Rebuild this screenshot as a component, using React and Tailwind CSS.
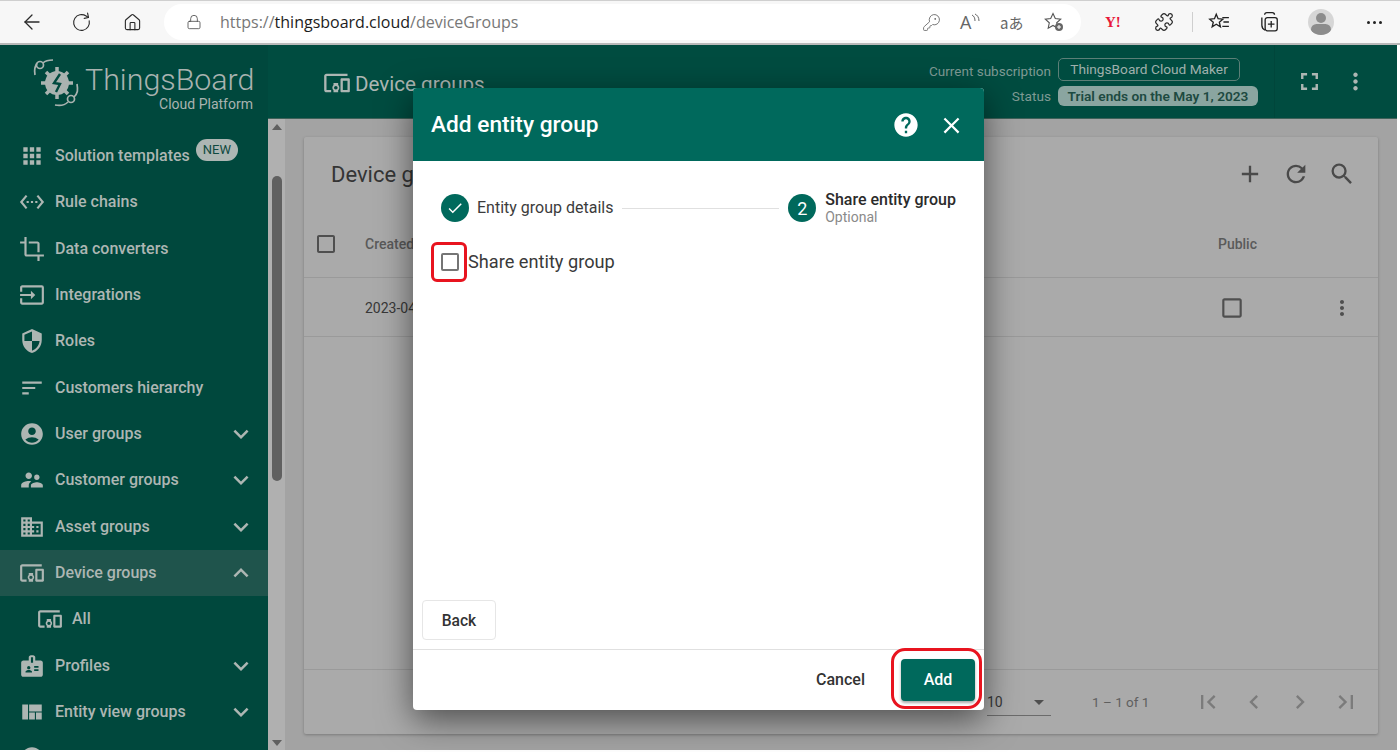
import React from 'react';
import { ArrowLeft, RotateCw, Home, Lock, KeyRound, Puzzle } from 'lucide-react';
import {
  MdApps, MdSettingsEthernet, MdCrop, MdInput, MdSecurity, MdSort, MdAccountCircle, MdSupervisorAccount,
  MdDomain, MdDevicesOther, MdBadge, MdViewQuilt, MdKeyboardArrowDown, MdKeyboardArrowUp, MdFullscreen,
  MdMoreVert, MdAdd, MdRefresh, MdSearch, MdHelp, MdClose, MdCheck, MdFirstPage, MdChevronLeft,
  MdChevronRight, MdLastPage, MdArrowDropDown, MdCheckBoxOutlineBlank,
} from 'react-icons/md';

const NAV = [
  { label: 'Solution templates', icon: MdApps, badge: true },
  { label: 'Rule chains', icon: MdSettingsEthernet },
  { label: 'Data converters', icon: MdCrop },
  { label: 'Integrations', icon: MdInput },
  { label: 'Roles', icon: MdSecurity },
  { label: 'Customers hierarchy', icon: MdSort },
  { label: 'User groups', icon: MdAccountCircle, arrow: 'down' },
  { label: 'Customer groups', icon: MdSupervisorAccount, arrow: 'down' },
  { label: 'Asset groups', icon: MdDomain, arrow: 'down' },
  { label: 'Device groups', icon: MdDevicesOther, arrow: 'up', active: true },
  { label: 'All', icon: MdDevicesOther, sub: true },
  { label: 'Profiles', icon: MdBadge, arrow: 'down' },
  { label: 'Entity view groups', icon: MdViewQuilt, arrow: 'down' },
];

function BrowserBar() {
  return (
    <div className="h-[45px] bg-[#f7f7f7] border-t border-b-2 border-t-[#cfcfcf] border-b-[#b9b9b9] flex items-center shrink-0 text-[#2b2b2b]">
      <div className="w-[164px] flex items-center shrink-0">
        <ArrowLeft size={24} strokeWidth={1.3} className="ml-[20px]" />
        <RotateCw size={21} strokeWidth={1.3} className="ml-[27px] -rotate-12" />
        <Home size={19} strokeWidth={1.4} className="ml-[31px]" />
      </div>
      <div className="w-[917px] h-[36px] bg-white rounded-full flex items-center shrink-0">
        <Lock size={16} strokeWidth={1.2} className="ml-[22px] text-[#444]" />
        <span className="ml-[18px] font-['Open_Sans',sans-serif] text-[16px] text-[#777]">
          https://<span className="text-[#1c1c1c]">thingsboard.cloud</span>/deviceGroups
        </span>
        <div className="ml-auto flex items-center text-[#666]">
          <KeyRound size={19} strokeWidth={1.1} />
          <span className="ml-[19px] w-[24px] flex items-start">
            <span className="font-['Open_Sans',sans-serif] text-[18px] leading-none">A</span>
            <svg width="9" height="11" viewBox="0 0 9 11" fill="none" stroke="#666" strokeWidth="1">
              <path d="M1 2c2 1 3 3 3 6M4 1c2 1 4 3 4 7" />
            </svg>
          </span>
          <span className="ml-[16px] w-[26px] whitespace-nowrap font-['Noto_Sans_CJK_JP',sans-serif] text-[15px] leading-none">aあ</span>
          <svg width="20" height="20" viewBox="0 0 20 20" className="ml-[18px] mr-[17px]" fill="none" stroke="#555" strokeWidth="1.1">
            <path d="M9 1.5l2.3 5 5.4.6-4 3.7 1.1 5.4L9 13.5l-4.800 2.700 1.100-5.400-4-3.700 5.400-.6z" />
            <circle cx="15" cy="15" r="4" fill="#666" stroke="none" />
            <path d="M15 13v4M13 15h4" stroke="#fff" />
          </svg>
        </div>
      </div>
      <span className="ml-[24px] w-[20px] font-['Liberation_Serif',serif] font-bold text-[15px] text-[#e8173a] leading-none">Y!</span>
      <Puzzle size={20} strokeWidth={1.5} className="ml-[29px]" />
      <div className="ml-[18px] w-px h-[20px] bg-[#cfcfcf]" />
      <svg width="22" height="22" viewBox="0 0 20 20" className="ml-[15px]" fill="none" stroke="#222" strokeWidth="1.200">
        <path d="M7.500 3l1.700 4 4.300.4-3.200 2.800 1 4.200-3.800-2.300-3.700 2.300 1-4.200L1.600 7.400 5.900 7z" />
        <path d="M13 6h6M14 10h5M13 14h6" />
      </svg>
      <svg width="22" height="22" viewBox="0 0 20 20" className="ml-[28px]" fill="none" stroke="#222" strokeWidth="1.200">
        <path d="M6 3.500a2 2 0 0 1 2-2h5a2 2 0 0 1 2 2M3.500 6v7a5 5 0 0 0 3 4.500" />
        <rect x="6.500" y="6" width="11" height="12" rx="2" />
        <path d="M12 9v6M9 12h6" />
      </svg>
      <div className="ml-[28px] w-[26px] h-[26px] rounded-full bg-[#d6d6d6] flex flex-col items-center overflow-hidden">
        <div className="mt-[4px] w-[10px] h-[10px] rounded-full bg-[#8c8c8c]" />
        <div className="mt-[1px] w-[20px] h-[12px] rounded-full bg-[#8c8c8c]" />
      </div>
      <span className="ml-[33px] flex gap-[3px]">
        <i className="w-[3px] h-[3px] rounded-full bg-[#222]" />
        <i className="w-[3px] h-[3px] rounded-full bg-[#222]" />
        <i className="w-[3px] h-[3px] rounded-full bg-[#222]" />
      </span>
    </div>
  );
}

function Logo() {
  return (
    <svg width="48" height="50" viewBox="0 0 48 50" fill="none" stroke="#a9b3b0" strokeWidth="1.700" className="shrink-0">
      <circle cx="7" cy="7" r="3.500" />
      <path d="M2 17C1 11 2 9 4 5M10 5C12 3 15 2 20 2" />
      <circle cx="38" cy="41" r="3.500" />
      <path d="M44 26c1 6 1 9-3 13M35 44c-3 3-8 4-13 3" />
      <circle cx="24" cy="25" r="12" fill="#a9b3b0" stroke="none" />
      <path d="M24 9v32M8 25h32M13 14l22 22M35 14L13 36" stroke="#a9b3b0" strokeWidth="3.500" />
      <path d="M27 16l-6 9 6 1-4 8" stroke="#004a3f" strokeWidth="2.400" />
    </svg>
  );
}

function Sidebar() {
  return (
    <aside className="w-[268px] shrink-0 bg-[#00483d] overflow-hidden font-['Roboto',sans-serif]">
      <div className="h-[88px] pl-[33px] pt-[13px] flex items-start">
        <Logo />
        <div className="ml-[4px] w-[168px] text-[#a9b3b0] text-right">
          <div className="text-[30.4px] font-light leading-[36px] mt-[4px] whitespace-nowrap">ThingsBoard</div>
          <div className="text-[14px] leading-[12px]">Cloud Platform</div>
        </div>
      </div>
      {NAV.map((item) => {
        const Icon = item.icon;
        return (
          <div
            key={item.label}
            className={`h-[46.33px] flex items-center text-[#adb6b3] ${item.active ? 'bg-[#1f544c]' : ''} ${item.sub ? 'pl-[37px]' : 'pl-[19px]'}`}
          >
            <Icon size={26} className="shrink-0" />
            <span className={`text-[16px] font-medium whitespace-nowrap ${item.sub ? 'ml-[9px]' : 'ml-[10px]'}`}>{item.label}</span>
            {item.badge && (
              <span className="ml-[6px] -mt-[12px] h-[22px] px-[7px] rounded-full bg-[#adb6b3] text-[#0f4a40] text-[13px] leading-[22px]">NEW</span>
            )}
            {item.arrow === 'down' && <MdKeyboardArrowDown size={30} className="ml-auto mr-[12px]" />}
            {item.arrow === 'up' && <MdKeyboardArrowUp size={30} className="ml-auto mr-[12px]" />}
          </div>
        );
      })}
      <div className="h-[46px] pl-[19px] flex items-center text-[#adb6b3]">
        <MdAccountCircle size={26} />
      </div>
    </aside>
  );
}

function Header() {
  return (
    <header className="h-[74px] bg-[#004c40] flex items-center shrink-0 font-['Roboto',sans-serif] border-b border-[#3f6159]">
      <div className="ml-[55px] mt-[5px] flex items-center text-[#adb6b3]">
        <MdDevicesOther size={28} className="-mt-[2px]" />
        <span className="ml-[4px] text-[20.6px] whitespace-nowrap">Device groups</span>
      </div>
      <div className="ml-auto mt-[2px] grid grid-cols-[auto_auto] gap-x-[7px] gap-y-[5px] items-center text-[13.7px] justify-items-start">
        <span className="justify-self-end text-[13.5px] text-[#7f9a94] mt-[2px]">Current subscription</span>
        <span className="h-[23px] w-[182px] rounded-[5px] border border-[#5c7f77] text-[#9fb0ac] text-center leading-[20px]">ThingsBoard Cloud Maker</span>
        <span className="justify-self-end text-[#7f9a94]">Status</span>
        <span className="h-[20px] w-[200px] rounded-[6px] bg-[#8aa5a0] text-[#1d4a41] font-semibold text-center leading-[20px]">Trial ends on the May 1, 2023</span>
      </div>
      <div className="ml-[16px] h-full w-px bg-[#00463b]" />
      <MdFullscreen size={29} className="ml-[20px] text-[#adb6b3]" />
      <MdMoreVert size={27} className="ml-[18px] mr-[28px] text-[#adb6b3]" />
    </header>
  );
}

function DeviceCard() {
  const ico = 'text-[#4a4a4a]';
  return (
    <div className="flex-1 mx-[19px] mt-[18px] mb-[16px] bg-[#aaaaaa] rounded-[2px] shadow-[0_1px_3px_rgba(0,0,0,0.25)] flex flex-col font-['Roboto',sans-serif]">
      <div className="h-[73px] pt-[1px] flex items-center pl-[27px] pr-[22px] shrink-0">
        <span className="text-[22px] text-[#353535]">Device groups</span>
        <div className="ml-auto flex gap-[18px]">
          <MdAdd size={28} className={ico} />
          <MdRefresh size={28} className={ico} />
          <MdSearch size={28} className={ico} />
        </div>
      </div>
      <div className="h-[68px] pt-[1px] flex items-center pl-[10px] border-b border-[#9a9a9a] shrink-0">
        <MdCheckBoxOutlineBlank size={24} className="text-[#4f4f4f]" />
        <span className="ml-[27px] text-[14px] font-medium text-[#5a5a5a]">Created time</span>
        <span className="ml-auto mr-[121px] text-[14px] font-medium text-[#5a5a5a]">Public</span>
      </div>
      <div className="h-[59px] pt-[2px] flex items-center pl-[61px] border-b border-[#9a9a9a] shrink-0">
        <span className="text-[14px] text-[#383838]">2023-04-17 10:00:00</span>
        <MdCheckBoxOutlineBlank size={26} className="ml-auto mr-[1px] text-[#4f4f4f]" />
        <MdMoreVert size={24} className="ml-[84px] mr-[24px] text-[#4f4f4f]" />
      </div>
      <div className="flex-1" />
      <div className="h-[65px] border-t border-[#9a9a9a] flex items-center shrink-0 text-[#5f5f5f]">
        <div className="ml-[683px] w-[64px] h-[27px] mt-[1px] border-b border-[#6b6b6b] flex items-center justify-between text-[14px] text-[#383838]">
          10
          <MdArrowDropDown size={24} className="text-[#4f4f4f]" />
        </div>
        <span className="ml-[41px] text-[13.5px] whitespace-nowrap">1 – 1 of 1</span>
        <div className="ml-[45px] flex gap-[18px] text-[#7b7b7b]">
          <MdFirstPage size={28} />
          <MdChevronLeft size={28} />
          <MdChevronRight size={28} />
          <MdLastPage size={28} />
        </div>
      </div>
    </div>
  );
}

function Dialog() {
  return (
    <div className="absolute left-[413px] top-[88px] w-[571px] h-[622px] bg-white rounded-[4px] shadow-[0_10px_34px_rgba(0,0,0,0.55)] flex flex-col font-['Roboto',sans-serif]">
      <div className="h-[73px] pt-[1px] bg-[#00695c] rounded-t-[4px] flex items-center pl-[18px] pr-[19px] text-white shrink-0">
        <h2 className="text-[22.7px] font-medium">Add entity group</h2>
        <MdHelp size={28} className="ml-auto" />
        <MdClose size={27} className="ml-[18px]" />
      </div>
      <div className="flex-1 flex flex-col px-[9px]">
        <div className="h-[60px] mt-[17px] flex items-center pl-[19px] pr-[19px] shrink-0">
          <div className="w-[28px] h-[28px] rounded-full bg-[#00695c] text-white flex items-center justify-center shrink-0">
            <MdCheck size={18} />
          </div>
          <span className="ml-[8px] text-[16px] text-[#3c3c3c] whitespace-nowrap">Entity group details</span>
          <div className="flex-1 mx-[9px] h-px bg-[#e0e0e0]" />
          <div className="w-[28px] h-[28px] rounded-full bg-[#00695c] text-white flex items-center justify-center shrink-0 text-[18px]">2</div>
          <div className="ml-[9px] leading-none">
            <div className="text-[16px] font-medium text-[#2b2b2b] whitespace-nowrap">Share entity group</div>
            <div className="mt-[2px] text-[14px] text-[#8a8a8a]">Optional</div>
          </div>
        </div>
        <label className="mt-[10px] ml-[19px] flex items-center">
          <span className="w-[18px] h-[18px] border-2 border-[#757575] rounded-[2px] shrink-0" />
          <span className="ml-[9px] text-[18.2px] text-[#3a3a3a]">Share entity group</span>
        </label>
        <button className="mt-auto mb-[9px] w-[74px] h-[40px] pt-[3px] border border-[#e6e6e6] rounded-[4px] text-[15.6px] font-medium text-[#333]">Back</button>
      </div>
      <div className="h-[61px] border-t border-[#e0e0e0] flex items-center justify-end pr-[9px] shrink-0">
        <button className="text-[16px] font-medium text-[#333]">Cancel</button>
        <button className="ml-[36px] w-[74px] h-[42px] rounded-[4px] bg-[#00695c] text-white text-[16px] font-medium shadow-[0_2px_3px_rgba(0,0,0,0.35)]">Add</button>
      </div>
      <div className="absolute left-[18px] top-[154px] w-[36px] h-[40px] border-[3px] border-[#e8141f] rounded-[6px]" />
      <div className="absolute left-[478px] top-[560px] w-[91px] h-[61px] border-[3px] border-[#e8141f] rounded-[14px]" />
    </div>
  );
}

export default function App() {
  return (
    <div className="relative w-[1400px] h-[752px] bg-white overflow-hidden flex flex-col">
      <BrowserBar />
      <div className="h-[705px] w-[1397px] flex shrink-0 overflow-hidden">
        <Sidebar />
        <div className="flex-1 flex flex-col min-w-0">
          <Header />
          <div className="flex-1 flex min-h-0 bg-[#a3a3a3]">
            <div className="w-[17px] bg-[#b0b0b0] flex flex-col items-center shrink-0">
              <span className="mt-[5px] w-0 h-0 border-x-[5px] border-x-transparent border-b-[6px] border-b-[#606060]" />
              <div className="mt-[46px] w-[10px] h-[305px] rounded-full bg-[#606060]" />
              <span className="mt-auto mb-[4px] w-0 h-0 border-x-[5px] border-x-transparent border-t-[6px] border-t-[#606060]" />
            </div>
            <DeviceCard />
          </div>
        </div>
      </div>
      <Dialog />
    </div>
  );
}
